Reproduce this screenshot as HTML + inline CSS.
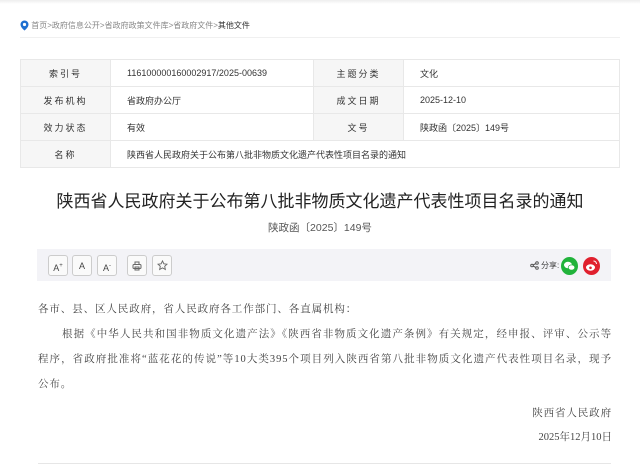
<!DOCTYPE html>
<html><head><meta charset="utf-8"><style>
*{margin:0;padding:0;box-sizing:border-box}
body{width:640px;height:468px;overflow:hidden;background:#fff;font-family:"Liberation Sans","Noto Sans CJK SC",sans-serif;color:#333;position:relative}
.topbar{position:absolute;left:0;top:0;width:640px;height:4px;background:linear-gradient(#eee,#fff)}
.crumb{position:absolute;left:20px;top:20px;font-size:8px;color:#888;display:flex;align-items:center}
.crumb b{font-weight:normal;color:#333}
.hr1{position:absolute;left:20px;top:37px;width:600px;height:1px;background:#f0f0f0}
table{position:absolute;left:20px;top:59px;width:600px;border-collapse:collapse;font-size:9px}
td{border:1px solid #e8e8e8;height:27px;padding:0 0 0 16px}
td.l{background:#f6f6f6;text-align:center;padding:0;letter-spacing:2px;width:90px}
td.l2{background:#f6f6f6;text-align:center;padding:0;letter-spacing:2px;width:90px}
h1{position:absolute;left:0;width:640px;top:187px;text-align:center;font-size:17px;font-weight:normal;color:#222}
.sub{position:absolute;left:0;width:640px;top:220px;text-align:center;font-size:10.5px;color:#555}
.tool{position:absolute;left:37px;top:249px;width:574px;height:32px;background:#f3f3f7}
.btn{position:absolute;top:6px;width:20px;height:21px;border:1px solid #ccc;border-radius:3px;background:#fafafa;font-size:9px;color:#444;text-align:center;line-height:20px}
.share{position:absolute;left:493px;top:11px;font-size:8px;color:#444;display:flex;align-items:center;gap:2px}
.ci{position:absolute;top:8px;width:17px;height:18px;border-radius:50%}
.body{position:absolute;left:38px;width:574px;font-family:"Liberation Serif","Noto Serif CJK SC",serif;font-size:10.5px;letter-spacing:0.9px;color:#444;line-height:25px;white-space:nowrap}
.j{text-align:justify;text-align-last:justify}
.hr2{position:absolute;left:38px;top:463px;width:573px;height:1px;background:#e6e6e6}
</style></head><body>
<div class="topbar"></div>
<div class="crumb"><svg width="9" height="11" viewBox="0 0 9 11"><path d="M4.5 0.5a4 4 0 0 1 4 4c0 3-4 6-4 6s-4-3-4-6a4 4 0 0 1 4-4z" fill="#1e6fd0"/><circle cx="4.5" cy="4.5" r="1.6" fill="#fff"/></svg>&nbsp;首页&gt;政府信息公开&gt;省政府政策文件库&gt;省政府文件&gt;<b>其他文件</b></div>
<div class="hr1"></div>
<table>
<tr><td class="l">索引号</td><td style="width:203px">116100000160002917/2025-00639</td><td class="l2">主题分类</td><td>文化</td></tr>
<tr><td class="l">发布机构</td><td>省政府办公厅</td><td class="l2">成文日期</td><td>2025-12-10</td></tr>
<tr><td class="l">效力状态</td><td>有效</td><td class="l2">文号</td><td>陕政函〔2025〕149号</td></tr>
<tr><td class="l">名称</td><td colspan="3">陕西省人民政府关于公布第八批非物质文化遗产代表性项目名录的通知</td></tr>
</table>
<h1>陕西省人民政府关于公布第八批非物质文化遗产代表性项目名录的通知</h1>
<div class="sub">陕政函〔2025〕149号</div>
<div class="tool">
<div class="btn" style="left:11px">A<sup style="font-size:6px">+</sup></div>
<div class="btn" style="left:35px">A</div>
<div class="btn" style="left:60px">A<sup style="font-size:6px">-</sup></div>
<div class="btn" style="left:90px"><svg width="10" height="10" viewBox="0 0 10 10" style="margin-top:5px"><rect x="1" y="3.5" width="8" height="4" rx="1" fill="none" stroke="#666"/><rect x="3" y="1" width="4" height="2.5" fill="none" stroke="#666"/><rect x="3" y="6" width="4" height="3" fill="none" stroke="#666"/></svg></div>
<div class="btn" style="left:115px"><svg width="11" height="11" viewBox="0 0 12 12" style="margin-top:4px"><path d="M6 1l1.5 3.2 3.4.4-2.5 2.3.7 3.4L6 8.6 2.9 10.3l.7-3.4L1.1 4.6l3.4-.4z" fill="none" stroke="#666"/></svg></div>
<div class="share"><svg width="9" height="9" viewBox="0 0 9 9"><circle cx="2" cy="4.5" r="1.3" fill="none" stroke="#555"/><circle cx="7" cy="2" r="1.3" fill="none" stroke="#555"/><circle cx="7" cy="7" r="1.3" fill="none" stroke="#555"/><path d="M3 4l3-1.5M3 5l3 1.5" stroke="#555"/></svg>分享:</div>
<div class="ci" style="left:524px;background:#21b33b"><svg width="17" height="18" viewBox="0 0 17 18"><ellipse cx="7" cy="8" rx="4" ry="3.2" fill="#fff"/><ellipse cx="10.5" cy="10.5" rx="3.3" ry="2.6" fill="#fff" stroke="#21b33b" stroke-width=".7"/></svg></div>
<div class="ci" style="left:546px;background:#e0202e"><svg width="17" height="18" viewBox="0 0 17 18"><ellipse cx="7.5" cy="10.5" rx="4.5" ry="3.2" fill="#fff"/><circle cx="7.5" cy="10.8" r="1.3" fill="#e0202e"/><path d="M10.5 4a3 3 0 0 1 3 3" stroke="#fff" fill="none"/></svg></div>
</div>
<div class="body" style="top:297px">各市、县、区人民政府，省人民政府各工作部门、各直属机构：</div>
<div class="body j" style="top:322px;left:62px;width:550px">根据《中华人民共和国非物质文化遗产法》《陕西省非物质文化遗产条例》有关规定，经申报、评审、公示等</div>
<div class="body j" style="top:347px">程序，省政府批准将“蓝花花的传说”等10大类395个项目列入陕西省第八批非物质文化遗产代表性项目名录，现予</div>
<div class="body" style="top:372px">公布。</div>
<div class="body" style="top:401px;text-align:right">陕西省人民政府</div>
<div class="body" style="top:425px;text-align:right;letter-spacing:0">2025年12月10日</div>
<div class="hr2"></div>
</body></html>
